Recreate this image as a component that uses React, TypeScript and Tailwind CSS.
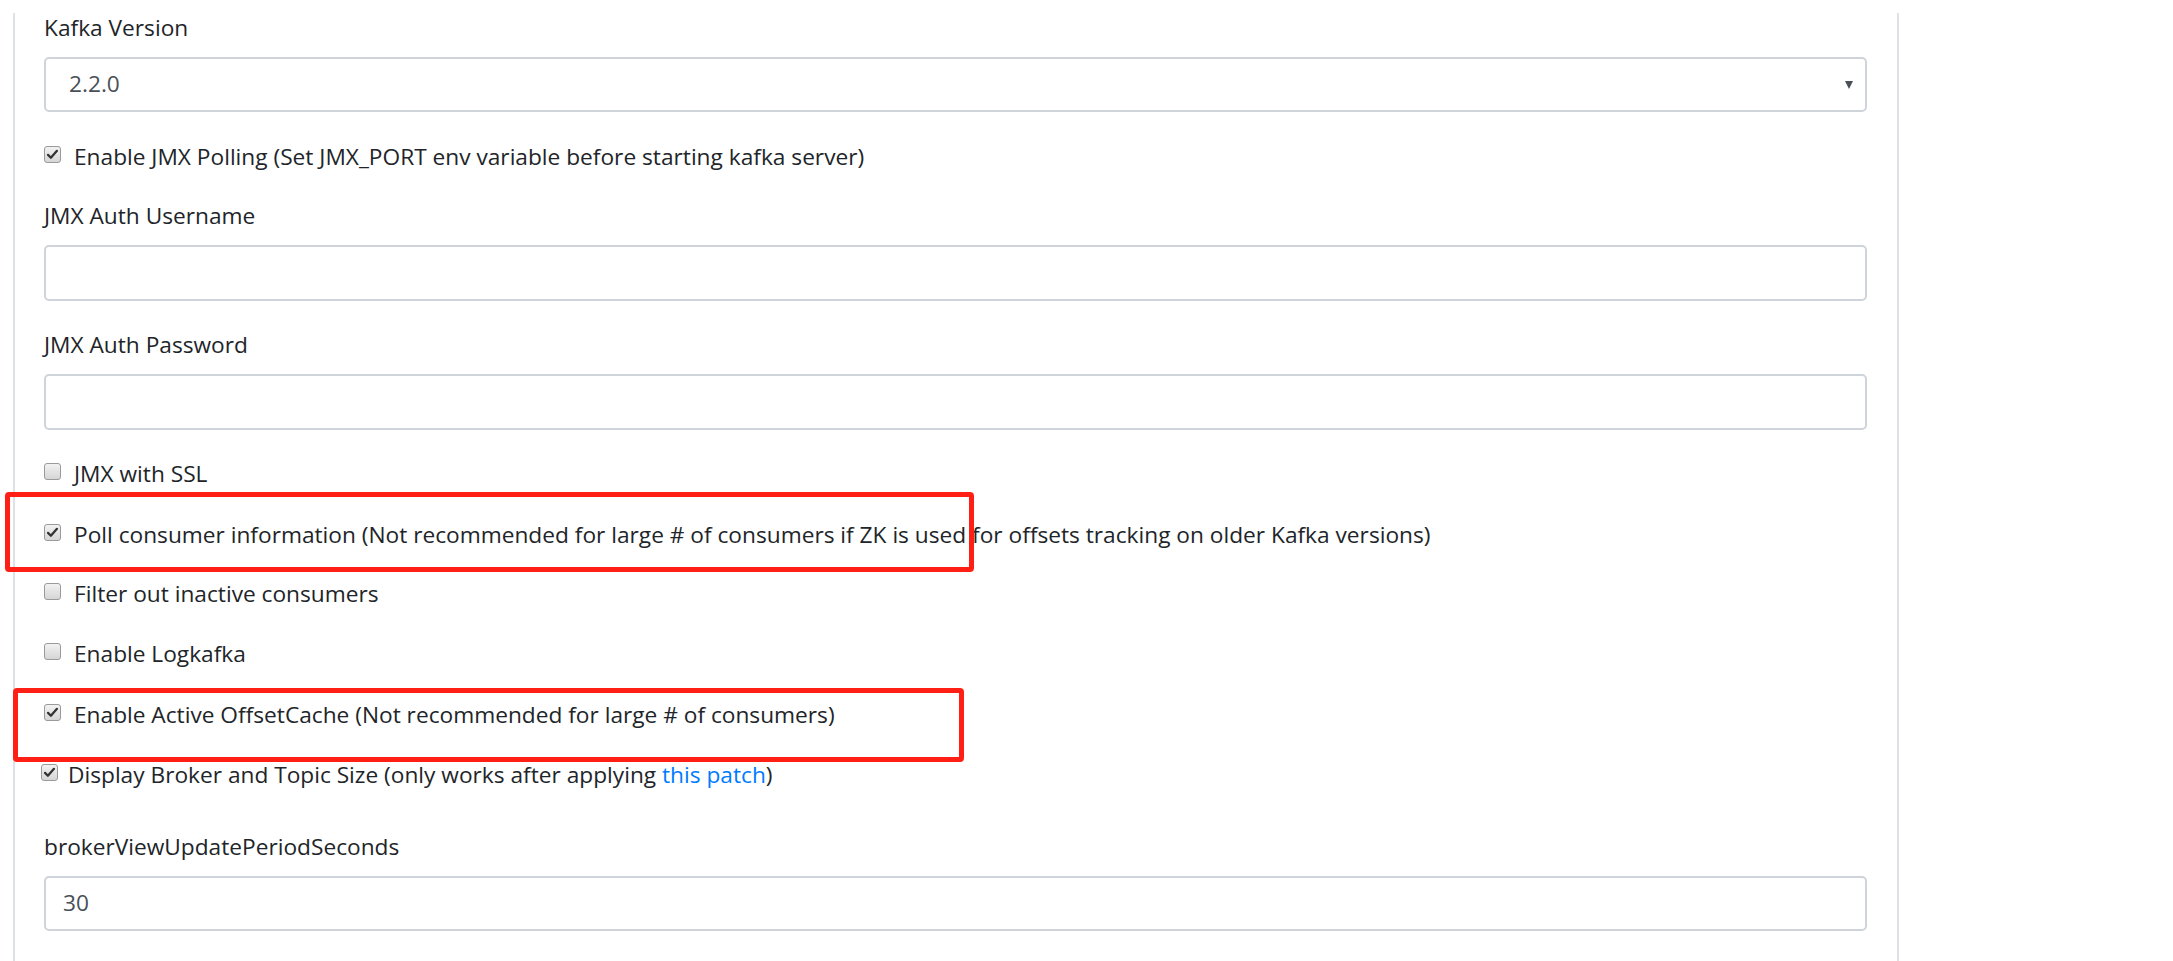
import React from "react";

function Check({ checked = false, className = "" }: { checked?: boolean; className?: string }) {
  return (
    <span
      className={
        "relative mb-[6px] inline-flex h-[17px] w-[17px] shrink-0 items-center justify-center rounded-[3px] border border-[#9a9a9a] bg-gradient-to-b from-[#f2f2f2] to-[#d6d6d6] " +
        className
      }
    >
      {checked && (
        <svg viewBox="0 0 16 16" className="h-[13px] w-[13px]">
          <path d="M2.5 8.5 L6 12 L13.5 3.5" fill="none" stroke="#333" strokeWidth="2.8" strokeLinecap="round" strokeLinejoin="round" />
        </svg>
      )}
    </span>
  );
}

function CheckRow({
  checked,
  mt,
  children,
  tight = false,
}: {
  checked?: boolean;
  mt: string;
  children: React.ReactNode;
  tight?: boolean;
}) {
  return (
    <div className={"flex h-[30px] items-center " + mt}>
      <Check checked={checked} className={tight ? "-ml-[3px] mr-[10px]" : "mr-[13px]"} />
      <span>{children}</span>
    </div>
  );
}

function Label({ mt, children }: { mt: string; children: React.ReactNode }) {
  return <div className={"flex h-[30px] items-center " + mt}>{children}</div>;
}

function TextInput({ mt, value = "" }: { mt: string; value?: string }) {
  return (
    <div
      className={
        "flex h-[56px] items-center rounded-[5px] border-2 border-[#ced4da] bg-white pl-[17px] text-[#495057] " + mt
      }
    >
      {value}
    </div>
  );
}

export default function App() {
  return (
    <div
      className="relative h-[961px] w-[2173px] overflow-hidden bg-white text-[22.7px] text-[#212529]"
      style={{ fontFamily: '"Open Sans", "Noto Sans", sans-serif' }}
    >
      <div className="ml-[13px] h-full w-[1886px] border-x-2 border-[#dee2e6] pl-[29px] pr-[30px]">
        <Label mt="mt-[13px]">Kafka Version</Label>

        <div className="mt-[14px] flex h-[55px] items-center justify-between rounded-[5px] border-2 border-[#ced4da] bg-white pl-[23px] pr-[12px] text-[#495057]">
          <span>2.2.0</span>
          <svg viewBox="0 0 8 8" className="h-[8px] w-[8px]">
            <path d="M0 0 H8 L4 8 Z" fill="#495057" />
          </svg>
        </div>

        <CheckRow checked mt="mt-[30px]">
          Enable JMX Polling (Set JMX_PORT env variable before starting kafka server)
        </CheckRow>

        <Label mt="mt-[29px]">JMX Auth Username</Label>
        <TextInput mt="mt-[14px]" />

        <Label mt="mt-[29px]">JMX Auth Password</Label>
        <TextInput mt="mt-[14px]" />

        <CheckRow mt="mt-[29px]">JMX with SSL</CheckRow>
        <CheckRow checked mt="mt-[31px]">
          Poll consumer information (Not recommended for large # of consumers if ZK is used for offsets tracking on
          older Kafka versions)
        </CheckRow>
        <CheckRow mt="mt-[29px]">Filter out inactive consumers</CheckRow>
        <CheckRow mt="mt-[30px]">Enable Logkafka</CheckRow>
        <CheckRow checked mt="mt-[31px]">
          Enable Active OffsetCache (Not recommended for large # of consumers)
        </CheckRow>
        <CheckRow checked tight mt="mt-[30px]">
          Display Broker and Topic Size (only works after applying <span className="text-[#007bff]">this patch</span>)
        </CheckRow>

        <Label mt="mt-[42px]">brokerViewUpdatePeriodSeconds</Label>
        <div className="mt-[14px] flex h-[55px] items-center rounded-[5px] border-2 border-[#ced4da] bg-white pl-[17px] text-[#495057]">
          30
        </div>
      </div>

      {/* red annotation boxes */}
      <div className="pointer-events-none absolute left-[5px] top-[492px] h-[80px] w-[969px] rounded-[4px] border-[5px] border-[#ff1f14]" />
      <div className="pointer-events-none absolute left-[13px] top-[688px] h-[74px] w-[951px] rounded-[4px] border-[5px] border-[#ff1f14]" />
    </div>
  );
}
